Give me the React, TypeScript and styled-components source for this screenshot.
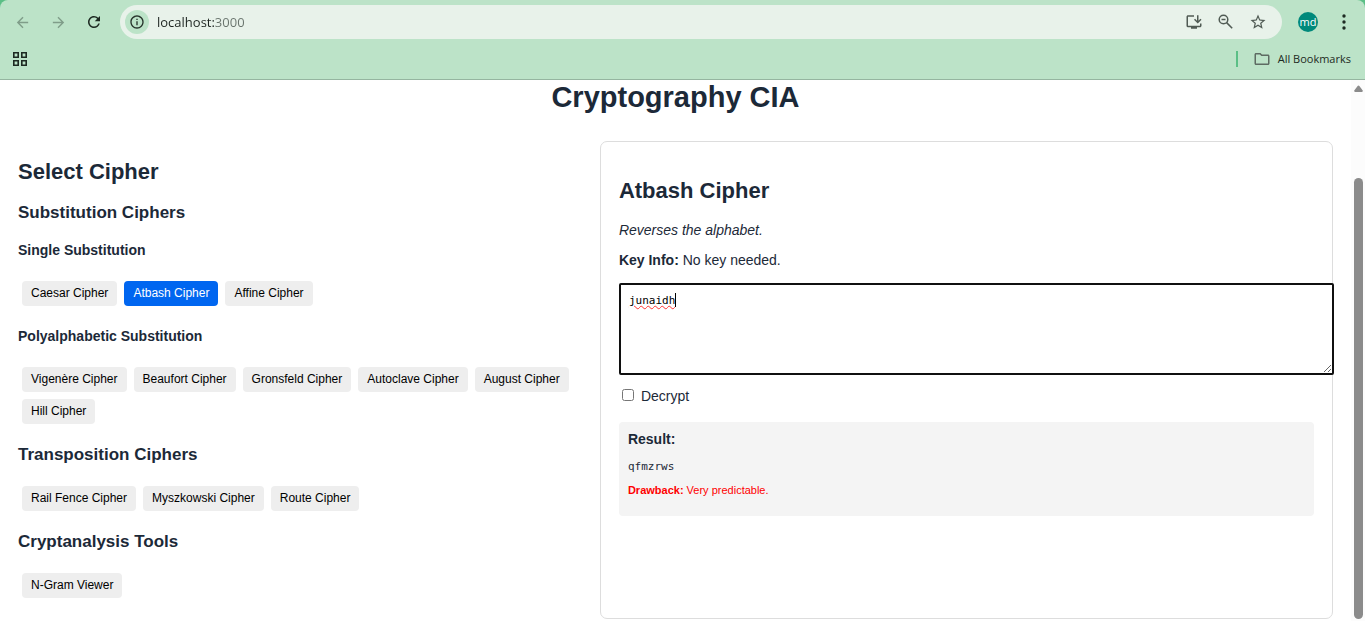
import React, { useState } from "react";
import styled, { createGlobalStyle } from "styled-components";
import {
  MdArrowBack,
  MdArrowForward,
  MdInfoOutline,
  MdOutlineFolder,
  MdOutlineInstallDesktop,
  MdRefresh,
  MdStarOutline,
} from "react-icons/md";

const GlobalStyle = createGlobalStyle`
  *, *::before, *::after { box-sizing: border-box; }
  body {
    margin: 0;
    background: #fff;
    color: #1c2938;
    font-family: "Liberation Sans", Arial, sans-serif;
    font-size: 14px;
    line-height: 18px;
  }
  h1, h2, h3, h4, p { margin: 0; }
`;

const uiFont = `"Open Sans", "Noto Sans", sans-serif`;
const monoFont = `"DejaVu Sans Mono", monospace`;

const Window = styled.div`
  display: flex;
  flex-direction: column;
  min-height: 100vh;
`;

const FrameTop = styled.div`
  background: #5bbf86;
`;

const BrowserBar = styled.header`
  height: 80px;
  padding-top: 5px;
  background: #bce3c8;
  border-bottom: 1px solid #95b5a0;
  border-radius: 8px 8px 0 0;
  font-family: ${uiFont};
`;

const AddressRow = styled.div`
  display: flex;
  align-items: center;
  height: 34px;
  padding: 0 11px 0 12px;
`;

const IconButton = styled.button<{ $color?: string; $gap?: number }>`
  display: flex;
  align-items: center;
  justify-content: center;
  flex: none;
  width: 20px;
  height: 20px;
  margin: 0 ${(p) => p.$gap ?? 0}px 0 0;
  padding: 0;
  border: 0;
  background: none;
  color: ${(p) => p.$color ?? "#1d2a22"};
`;

const AddressBar = styled.div`
  display: flex;
  align-items: center;
  flex: 1;
  height: 34px;
  margin-right: 16px;
  padding: 0 14px 0 5px;
  border-radius: 17px;
  background: #e8f2ea;
`;

const SiteInfo = styled.button`
  display: flex;
  align-items: center;
  justify-content: center;
  width: 24px;
  height: 24px;
  padding: 0;
  border: 0;
  border-radius: 50%;
  background: #bce3c8;
  color: #26332b;
`;

const UrlInput = styled.input`
  flex: 1;
  min-width: 0;
  margin-left: 8px;
  padding: 0;
  border: 0;
  outline: 0;
  font: 13px/20px ${uiFont};
  color: transparent;
  background: linear-gradient(90deg, #1c2420 58px, #68736c 58px);
  -webkit-background-clip: text;
  background-clip: text;
`;

const Avatar = styled.button`
  width: 20px;
  height: 20px;
  margin-right: 16px;
  padding: 0;
  border: 0;
  border-radius: 50%;
  background: #00897b;
  color: #fff;
  font: 11px/18px ${uiFont};
`;

const BookmarkRow = styled.div`
  display: flex;
  align-items: center;
  justify-content: space-between;
  height: 40px;
  padding: 0 14px 0 10px;
`;

const AllBookmarks = styled.button`
  display: flex;
  align-items: center;
  gap: 7px;
  height: 16px;
  padding: 0 0 0 15px;
  border: 0;
  border-left: 2px solid #5bbf86;
  background: none;
  color: #1d2a22;
  font: 11px/16px ${uiFont};

  svg { color: #5d6b62; }
`;

const Viewport = styled.div`
  display: flex;
  flex: 1;
`;

const Page = styled.main`
  flex: 1;
  min-width: 0;
  padding: 0 18px 2px;
`;

const Title = styled.h1`
  font-size: 29px;
  line-height: 34px;
  text-align: center;
`;

const Columns = styled.div`
  display: grid;
  grid-template-columns: 10fr 13fr;
  gap: 18px;
  margin-top: 27px;
`;

const CipherList = styled.section`
  padding: 18px 0 21px;
`;

const SectionTitle = styled.h2`
  font-size: 22px;
  line-height: 26px;
`;

const GroupTitle = styled.h3`
  margin-top: 21px;
  font-size: 17px;
  line-height: 20px;

  ${SectionTitle} + & { margin-top: 18px; }
`;

const SubgroupTitle = styled.h4`
  margin: 22px 0 23px;
  font-size: 14px;
  line-height: 16px;

  ${GroupTitle} + & { margin-top: 19px; }
`;

const ButtonRow = styled.div`
  display: flex;
  flex-wrap: wrap;
  gap: 7px;
  margin-top: 21px;
  padding-left: 4px;
`;

const CipherButton = styled.button<{ $active?: boolean }>`
  height: 25px;
  padding: 0 9px 1px;
  border: 0;
  border-radius: 4px;
  background: ${(p) => (p.$active ? "#0066f0" : "#eee")};
  color: ${(p) => (p.$active ? "#fff" : "#000")};
  font: 12px/16px "Liberation Sans", Arial, sans-serif;
  cursor: pointer;
`;

const Panel = styled.section`
  min-width: 0;
  padding: 36px 18px 18px;
  border: 1px solid #ddd;
  border-radius: 7px;
`;

const Description = styled.p`
  margin-top: 17px;
  font-style: italic;
`;

const KeyInfo = styled.p`
  margin-top: 12px;
`;

const Editor = styled.div`
  position: relative;
  margin-top: 14px;
  font: 11px/14px ${monoFont};
`;

const MessageBox = styled.textarea`
  display: block;
  box-sizing: content-box;
  width: 100%;
  height: 71px;
  margin: 0;
  padding: 9px 8px 8px;
  border: 2px solid #101010;
  border-radius: 2px;
  outline: 0;
  font: inherit;
  color: #000;
  background: #fff;
  text-decoration: underline wavy #f33 1px;
`;

const Caret = styled.span<{ $column: number }>`
  position: absolute;
  top: 10px;
  left: calc(10px + ${(p) => p.$column}ch);
  width: 1px;
  height: 14px;
  background: #000;
`;

const DecryptOption = styled.label`
  display: flex;
  align-items: center;
  gap: 7px;
  width: max-content;
  margin-top: 12px;

  input {
    width: 12px;
    height: 12px;
    margin: 0 0 2px 3px;
  }
`;

const ResultBox = styled.div`
  margin-top: 17px;
  padding: 8px 9px 19px;
  border-radius: 4px;
  background: #f4f4f4;
`;

const ResultText = styled.p`
  margin-top: 12px;
  font: 11px/14px ${monoFont};
`;

const Drawback = styled.p`
  margin-top: 9px;
  color: #f00;
  font-size: 11px;
  line-height: 14px;
`;

const ScrollTrack = styled.div`
  display: flex;
  flex-direction: column;
  align-items: center;
  width: 14px;
  padding: 5px 0 2px 1px;
  background: #fcfcfc;
`;

const ScrollThumb = styled.div`
  flex: 1;
  width: 9px;
  margin-top: 86px;
  border-radius: 5px;
  background: #8b8b8b;
`;

const single = ["Caesar Cipher", "Atbash Cipher", "Affine Cipher"];
const poly = [
  "Vigenère Cipher",
  "Beaufort Cipher",
  "Gronsfeld Cipher",
  "Autoclave Cipher",
  "August Cipher",
  "Hill Cipher",
];
const transposition = ["Rail Fence Cipher", "Myszkowski Cipher", "Route Cipher"];
const tools = ["N-Gram Viewer"];

const atbash = (text: string) =>
  text.replace(/[a-z]/gi, (c) => {
    const base = c <= "Z" ? 65 : 97;
    return String.fromCharCode(base + 25 - (c.charCodeAt(0) - base));
  });

function Buttons({ names }: { names: string[] }) {
  return (
    <ButtonRow>
      {names.map((name) => (
        <CipherButton key={name} type="button" $active={name === "Atbash Cipher"}>
          {name}
        </CipherButton>
      ))}
    </ButtonRow>
  );
}

function AppsIcon() {
  return (
    <svg width="14" height="14" viewBox="0 0 14 14" fill="none" stroke="currentColor" strokeWidth="1.600">
      <path d="M.8.8h4.400v4.400H.8zM8.800.8h4.400v4.400H8.800zM.8 8.800h4.400v4.400H.8zM8.800 8.800h4.400v4.400H8.800z" />
    </svg>
  );
}

function ZoomOutIcon() {
  return (
    <svg width="20" height="20" viewBox="0 0 20 20" fill="none" stroke="currentColor" strokeWidth="1.500">
      <circle cx="7.500" cy="7.500" r="4.300" />
      <path d="M10.600 10.600L16.200 16.200M5.500 7.500h4" />
    </svg>
  );
}

function MenuIcon() {
  return (
    <svg width="20" height="20" viewBox="0 0 20 20" fill="currentColor">
      <circle cx="10" cy="4" r="1.700" />
      <circle cx="10" cy="10" r="1.700" />
      <circle cx="10" cy="16" r="1.700" />
    </svg>
  );
}

export default function App() {
  const [message, setMessage] = useState("junaidh");
  const [decrypt, setDecrypt] = useState(false);

  return (
    <Window>
      <GlobalStyle />
      <FrameTop>
        <BrowserBar>
          <AddressRow>
            <IconButton aria-label="Back" $color="#7f9d89" $gap={16}>
              <MdArrowBack size={17} />
            </IconButton>
            <IconButton aria-label="Forward" $color="#7f9d89" $gap={16}>
              <MdArrowForward size={17} />
            </IconButton>
            <IconButton aria-label="Reload" $gap={16}>
              <MdRefresh size={18} />
            </IconButton>
            <AddressBar>
              <SiteInfo aria-label="Site information">
                <MdInfoOutline size={16} />
              </SiteInfo>
              <UrlInput aria-label="Address" defaultValue="localhost:3000" spellCheck={false} />
              <IconButton aria-label="Install page" $color="#505b54" $gap={12}>
                <MdOutlineInstallDesktop size={18} />
              </IconButton>
              <IconButton aria-label="Zoom" $color="#505b54" $gap={12}>
                <ZoomOutIcon />
              </IconButton>
              <IconButton aria-label="Bookmark this page" $color="#505b54">
                <MdStarOutline size={18} />
              </IconButton>
            </AddressBar>
            <Avatar aria-label="Profile">md</Avatar>
            <IconButton aria-label="Menu">
              <MenuIcon />
            </IconButton>
          </AddressRow>
          <BookmarkRow>
            <IconButton aria-label="Apps">
              <AppsIcon />
            </IconButton>
            <AllBookmarks>
              <MdOutlineFolder size={18} />
              All Bookmarks
            </AllBookmarks>
          </BookmarkRow>
        </BrowserBar>
      </FrameTop>

      <Viewport>
        <Page>
          <Title>Cryptography CIA</Title>
          <Columns>
            <CipherList>
              <SectionTitle>Select Cipher</SectionTitle>
              <GroupTitle>Substitution Ciphers</GroupTitle>
              <SubgroupTitle>Single Substitution</SubgroupTitle>
              <Buttons names={single} />
              <SubgroupTitle>Polyalphabetic Substitution</SubgroupTitle>
              <Buttons names={poly} />
              <GroupTitle>Transposition Ciphers</GroupTitle>
              <Buttons names={transposition} />
              <GroupTitle>Cryptanalysis Tools</GroupTitle>
              <Buttons names={tools} />
            </CipherList>

            <Panel>
              <SectionTitle>Atbash Cipher</SectionTitle>
              <Description>Reverses the alphabet.</Description>
              <KeyInfo>
                <strong>Key Info:</strong> No key needed.
              </KeyInfo>
              <Editor>
                <MessageBox
                  aria-label="Message"
                  value={message}
                  spellCheck={false}
                  onChange={(e) => setMessage(e.target.value)}
                />
                <Caret $column={message.length} />
              </Editor>
              <DecryptOption>
                <input type="checkbox" checked={decrypt} onChange={(e) => setDecrypt(e.target.checked)} />
                Decrypt
              </DecryptOption>
              <ResultBox>
                <strong>Result:</strong>
                <ResultText>{atbash(message)}</ResultText>
                <Drawback>
                  <strong>Drawback:</strong> Very predictable.
                </Drawback>
              </ResultBox>
            </Panel>
          </Columns>
        </Page>
        <ScrollTrack>
          <svg width="9" height="7" viewBox="0 0 9 7" fill="#8b8b8b">
            <path d="M4.5 0.500Q5 0.500 5.400 1L8.700 5.400Q9 6.700 8 7H1Q0 6.700 0.300 5.400L3.600 1Q4 0.500 4.500 0.500Z" />
          </svg>
          <ScrollThumb />
        </ScrollTrack>
      </Viewport>
    </Window>
  );
}
